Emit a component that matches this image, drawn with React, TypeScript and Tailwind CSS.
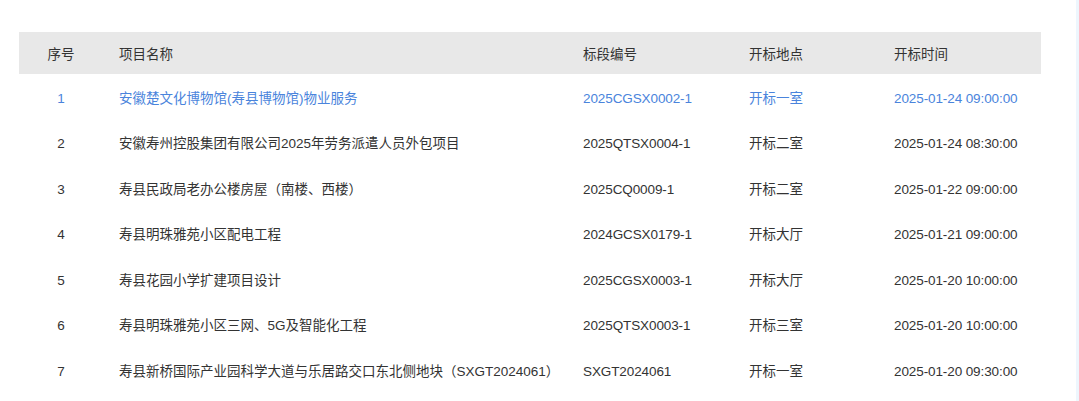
import React from "react";

type Row = {
  no: number;
  name: string;
  code: string;
  room: string;
  time: string;
};

const rows: Row[] = [
  { no: 1, name: "安徽楚文化博物馆(寿县博物馆)物业服务", code: "2025CGSX0002-1", room: "开标一室", time: "2025-01-24 09:00:00" },
  { no: 2, name: "安徽寿州控股集团有限公司2025年劳务派遣人员外包项目", code: "2025QTSX0004-1", room: "开标二室", time: "2025-01-24 08:30:00" },
  { no: 3, name: "寿县民政局老办公楼房屋（南楼、西楼）", code: "2025CQ0009-1", room: "开标二室", time: "2025-01-22 09:00:00" },
  { no: 4, name: "寿县明珠雅苑小区配电工程", code: "2024GCSX0179-1", room: "开标大厅", time: "2025-01-21 09:00:00" },
  { no: 5, name: "寿县花园小学扩建项目设计", code: "2025CGSX0003-1", room: "开标大厅", time: "2025-01-20 10:00:00" },
  { no: 6, name: "寿县明珠雅苑小区三网、5G及智能化工程", code: "2025QTSX0003-1", room: "开标三室", time: "2025-01-20 10:00:00" },
  { no: 7, name: "寿县新桥国际产业园科学大道与乐居路交口东北侧地块（SXGT2024061）", code: "SXGT2024061", room: "开标一室", time: "2025-01-20 09:30:00" },
];

const cols = "grid grid-cols-[84px_464px_166px_145px_163px]";

export default function App() {
  return (
    <div
      className="flex w-[1079px] h-[401px] bg-white overflow-hidden text-[13.5px] text-[#333]"
      style={{ fontFamily: '"Liberation Sans", "Noto Sans CJK SC", sans-serif' }}
    >
      <div className="flex-1 pl-[19px] pt-[32px]">
        <div className="w-[1022px]">
          <div className={`${cols} h-[42px] pt-[4px] items-center bg-[#e8e8e8]`}>
            <div className="text-center">序号</div>
            <div className="pl-4">项目名称</div>
            <div className="pl-4">标段编号</div>
            <div className="pl-4">开标地点</div>
            <div className="pl-4">开标时间</div>
          </div>

          {rows.map((r) => (
            <div
              key={r.no}
              className={`${cols} h-[45.5px] pt-[4px] items-center ${r.no === 1 ? "text-[#4a84dc]" : ""}`}
            >
              <div className="text-center">{r.no}</div>
              <div className="pl-4 whitespace-nowrap">{r.name}</div>
              <div className="pl-4 tracking-[-0.1px]">{r.code}</div>
              <div className="pl-4">{r.room}</div>
              <div className="pl-4 tracking-[-0.1px]">{r.time}</div>
            </div>
          ))}
        </div>
      </div>
      <div className="w-[3px] h-full bg-[#eef6fd]" />
    </div>
  );
}
